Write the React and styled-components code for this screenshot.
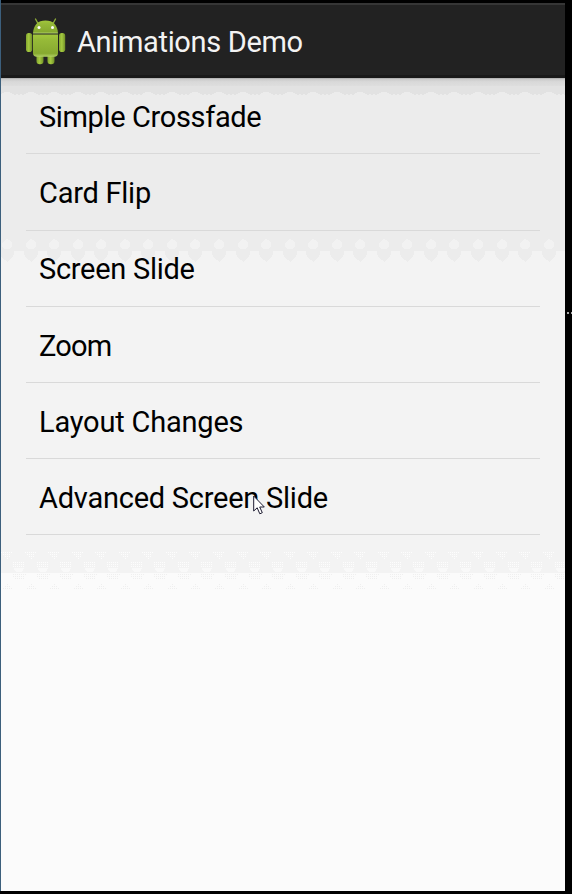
import React from "react";
import styled, { createGlobalStyle } from "styled-components";

const GlobalStyle = createGlobalStyle`
  * { box-sizing: border-box; }
  html, body { margin: 0; background: #000; overflow: hidden; }
`;

const Desktop = styled.div`
  width: 572px;
  height: 894px;
  display: flex;
  position: relative;
  background: #000;
  font-family: Roboto, "Noto Sans", sans-serif;
`;

const Screen = styled.main`
  width: 565px;
  height: 891px;
  display: flex;
  flex-direction: column;
  border-left: 1px solid #3c5f7c;
  background: #fbfbfb;
  position: relative;
  isolation: isolate;
`;

const ActionBar = styled.header`
  height: 78px;
  flex: none;
  display: flex;
  align-items: center;
  padding: 3px 0 0 23px;
  border-top: 3px solid #000;
  background: linear-gradient(#363636 0 2px, #222 2px 72px, #191919 72px 75px);
`;

const Title = styled.h1`
  margin: 0 0 0 10px;
  font-size: 29px;
  line-height: 36px;
  font-weight: 400;
  letter-spacing: -0.34px;
  color: #f3f3f3;
  white-space: nowrap;
`;

const DemoList = styled.ul`
  list-style: none;
  margin: 0;
  padding: 0 25px;
`;

const DemoItem = styled.li`
  height: ${(p) => p.$height}px;
  padding: ${(p) => p.$inset}px 0 0 13px;
  display: flex;
  align-items: flex-start;
  border-bottom: 1px solid #d9d9d9;
`;

const Label = styled.span`
  font-size: 29px;
  line-height: 36px;
  letter-spacing: ${(p) => p.$track}px;
  color: #000;
  white-space: nowrap;
`;

const Backdrop = styled.svg`
  position: absolute;
  inset: 0;
  z-index: -1;
  display: block;
`;

const Pointer = styled.svg`
  position: absolute;
  left: 253px;
  top: 495px;
`;

const Robot = styled.svg`
  flex: none;
  display: block;
`;

const EdgeMark = styled.div`
  position: absolute;
  left: 567px;
  top: 312px;
  width: 5px;
  height: 2px;
  background: linear-gradient(90deg, #aaa 0 2px, #000 2px 4px, #aaa 4px);
`;

const demos = [
  { name: "Simple Crossfade", track: -0.36, height: 76, inset: 21 },
  { name: "Card Flip", track: -0.25, height: 77, inset: 21 },
  { name: "Screen Slide", track: -0.28, height: 76, inset: 20 },
  { name: "Zoom", track: -0.8, height: 76, inset: 21 },
  { name: "Layout Changes", track: -0.2, height: 76, inset: 21 },
  { name: "Advanced Screen Slide", track: -0.24, height: 76, inset: 21 },
];

const columns = Array.from({ length: 25 }, (_, i) => Math.round(6 + i * 23.55));

function BandedBackdrop() {
  return (
    <Backdrop width="564" height="891" viewBox="0 0 564 891" shapeRendering="crispEdges">
      <defs>
        <linearGradient id="shade" x1="0" y1="0" x2="0" y2="1">
          <stop offset="0" stopColor="#a5a5a5" />
          <stop offset=".14" stopColor="#cacaca" />
          <stop offset=".45" stopColor="#d8d8d8" />
          <stop offset="1" stopColor="#dedede" />
        </linearGradient>
        <pattern id="lightDots" width="2" height="2" patternUnits="userSpaceOnUse">
          <path d="M0 0h1v1H0z" fill="#fdfdfd" />
        </pattern>
        <pattern id="darkDots" width="2" height="2" patternUnits="userSpaceOnUse">
          <path d="M0 0h1v1H0z" fill="#efefef" />
        </pattern>
      </defs>
      <rect width="564" height="573" fill="#f3f3f3" />
      <rect width="564" height="251" fill="#ececec" />
      <rect y="78" width="564" height="16" fill="#e2e2e2" />
      <rect y="78" width="564" height="8" fill="url(#shade)" />
      {columns.map((x) => (
        <g key={x} transform={`translate(${x} 0)`}>
          <path d="M-5 94h10v-1h-2v-1h-6v1h-2z" fill="#ececec" />
          <path d="M7 94h2v1H7zM11 94h2v1h-2zM15 94h2v1h-2z" fill="#e2e2e2" />
          <path d="M0 239l2 1 3 3v3l-3 3H-3l-2-3v-3l3-3z" fill="#f2f2f2" />
          <path d="M-7 251H7v2l-1 4-4 3-2 2-2-2-4-3-1-4z" fill="#ececec" />
          <path d="M-6 552H6L1 559H-1z" fill="url(#lightDots)" />
          <path d="M6 562H18v6H6z" fill="url(#lightDots)" />
          <path d="M7 568H17l-1 3-2 1H10l-2-1z" fill="#f9f9f9" />
          <path d="M5 573H19v2l-2 4H7l-2-4z" fill="url(#darkDots)" />
          <path d="M0 584l5 5H-5z" fill="url(#darkDots)" />
        </g>
      ))}
    </Backdrop>
  );
}

function AndroidRobot() {
  return (
    <Robot width="43" height="50" viewBox="0 0 43 50">
      <defs>
        <linearGradient id="skin" x1="0" y1="0" x2="0" y2="1">
          <stop offset="0" stopColor="#a3c83c" />
          <stop offset=".25" stopColor="#96ba38" />
          <stop offset=".85" stopColor="#87aa30" />
          <stop offset="1" stopColor="#b0d064" />
        </linearGradient>
        <linearGradient id="limb">
          <stop offset="0" stopColor="#83a62e" />
          <stop offset=".45" stopColor="#a5c940" />
          <stop offset="1" stopColor="#708f27" />
        </linearGradient>
      </defs>
      <path d="M14 6.500L11.500 2M29 6.500L31.500 2" stroke="#8dac38" strokeWidth="1.4" strokeLinecap="round" />
      <rect x="12.500" y="32" width="7" height="15.200" rx="3.200" fill="url(#limb)" />
      <rect x="23.500" y="32" width="7" height="15.200" rx="3.200" fill="url(#limb)" />
      <rect x="2" y="16" width="6.200" height="19" rx="2.800" fill="url(#limb)" />
      <rect x="35" y="16" width="6.200" height="19" rx="2.800" fill="url(#limb)" />
      <path d="M9 17.500h25v18.500a3.700 3.700 0 0 1-3.700 3.700H12.700A3.700 3.700 0 0 1 9 36z" fill="url(#skin)" />
      <path d="M9 16.500C9.300 8 14 3.500 21.500 3.500S33.700 8 34 16.500z" fill="url(#skin)" />
      <circle cx="15" cy="10.500" r="1.500" fill="#fff" />
      <circle cx="28.500" cy="10.500" r="1.500" fill="#fff" />
    </Robot>
  );
}

export default function App() {
  return (
    <>
      <GlobalStyle />
      <Desktop>
        <Screen>
          <BandedBackdrop />
          <ActionBar>
            <AndroidRobot />
            <Title>Animations Demo</Title>
          </ActionBar>
          <DemoList>
            {demos.map((demo) => (
              <DemoItem key={demo.name} $height={demo.height} $inset={demo.inset}>
                <Label $track={demo.track}>{demo.name}</Label>
              </DemoItem>
            ))}
          </DemoList>
        </Screen>
        <EdgeMark />
        <Pointer width="12" height="20" viewBox="0 0 12 20">
          <path d="M.7 1v15l3.500-3.200 2.600 6 2.500-1.100-2.600-5.700h4.600z" fill="#fff" stroke="#1c1a30" strokeWidth="1" />
        </Pointer>
      </Desktop>
    </>
  );
}
